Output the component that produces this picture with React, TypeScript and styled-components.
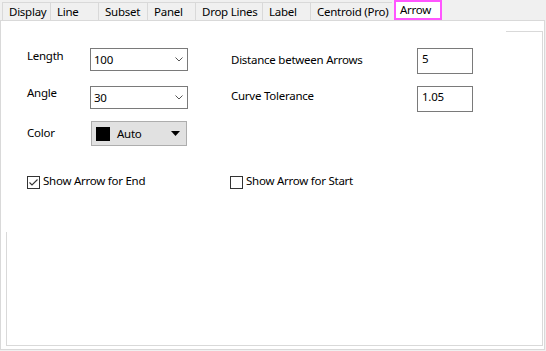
import React from "react";
import styled, { createGlobalStyle } from "styled-components";

const GlobalStyle = createGlobalStyle`
  html, body {
    margin: 0;
    padding: 0;
    background: #f0f0f0;
  }
  body {
    font-family: "Noto Sans", "Open Sans", sans-serif;
    font-size: 11.5px;
    letter-spacing: -0.25px;
    color: #000;
  }
`;

const Window = styled.div`
  width: 546px;
  height: 351px;
  background: #f0f0f0;
  display: flex;
  flex-direction: column;
  overflow: hidden;
`;

const TabStrip = styled.div`
  height: 20px;
  display: flex;
  align-items: flex-end;
  padding-left: 2px;
  box-sizing: border-box;
`;

const Tab = styled.div<{ $width: number; $active?: boolean }>`
  box-sizing: border-box;
  width: ${(p) => p.$width}px;
  height: ${(p) => (p.$active ? 20 : 18)}px;
  margin-left: ${(p) => (p.$active ? 2 : 0)}px;
  padding-left: ${(p) => (p.$active ? 4 : 6)}px;
  line-height: ${(p) => (p.$active ? 15 : 18)}px;
  background: ${(p) => (p.$active ? "#fff" : "#f0f0f0")};
  border: ${(p) => (p.$active ? "2px solid #ff55ff" : "1px solid #d9d9d9")};
  border-bottom: ${(p) => (p.$active ? "2px solid #ff55ff" : "none")};
  border-right: ${(p) => (p.$active ? "2px solid #ff55ff" : "none")};
  white-space: nowrap;
  position: relative;
  z-index: ${(p) => (p.$active ? 2 : 0)};
`;

const Panel = styled.div`
  position: relative;
  box-sizing: border-box;
  width: 545px;
  height: 330px;
  background: #fff;
  border: 1px solid #d9d9d9;
`;

const GroupFrame = styled.div`
  position: absolute;
  left: 5px;
  top: 10px;
  right: 1px;
  bottom: 3px;
  border: 1px solid #d9d9d9;
`;

const Form = styled.div`
  position: relative;
  z-index: 1;
  width: 505px;
  height: 211px;
  background: #fff;
  box-sizing: border-box;
  padding: 27px 0 0 26px;
`;

const FieldGrid = styled.div`
  display: grid;
  grid-template-columns: 63px 98px 43px 186px 56px;
  grid-template-rows: 38px 35px 25px;
  align-items: start;
`;

const Label = styled.div<{ $offset: number }>`
  line-height: 16px;
  margin-top: ${(p) => p.$offset}px;
  white-space: nowrap;
`;

const Combo = styled.div<{ $height: number }>`
  box-sizing: border-box;
  height: ${(p) => p.$height}px;
  border: 1px solid #7a7a7a;
  background: #fff;
  display: flex;
  align-items: center;
  padding: 0 4px 0 3px;
`;

const ComboValue = styled.span`
  flex: 1;
`;

const TextBox = styled.div<{ $height: number }>`
  box-sizing: border-box;
  height: ${(p) => p.$height}px;
  border: 1px solid #7a7a7a;
  background: #fff;
  padding: 2px 0 0 4px;
  line-height: 16px;
`;

const ColorButton = styled.div`
  box-sizing: border-box;
  width: 96px;
  height: 25px;
  margin-left: 1px;
  border: 1px solid #adadad;
  background: #e1e1e1;
  display: flex;
  align-items: center;
  padding: 0 6px 0 4px;
`;

const Swatch = styled.span<{ $color: string }>`
  width: 14px;
  height: 14px;
  background: ${(p) => p.$color};
  margin-right: 7px;
`;

const Spacer = styled.div``;

const CheckRow = styled.div`
  display: grid;
  grid-template-columns: 203px 200px;
  margin-top: 27px;
`;

const CheckItem = styled.label`
  display: flex;
  align-items: center;
  gap: 3px;
  line-height: 16px;
`;

const Box = styled.span`
  box-sizing: border-box;
  width: 13px;
  height: 13px;
  margin-top: 3px;
  border: 1px solid #333;
  background: #fff;
  display: flex;
  align-items: center;
  justify-content: center;
`;

const Chevron = () => (
  <svg width="8" height="5" viewBox="0 0 8 5">
    <path d="M0.5 0.5 L4 4 L7.5 0.5" fill="none" stroke="#555" strokeWidth="1" />
  </svg>
);

const DropTriangle = () => (
  <svg width="9" height="5" viewBox="0 0 9 5">
    <path d="M0 0 H9 L4.5 5 Z" fill="#000" />
  </svg>
);

const Check = ({ checked }: { checked: boolean }) => (
  <Box>
    {checked && (
      <svg width="11" height="11" viewBox="0 0 11 11">
        <path d="M1.5 5.5 L4 8 L9.5 2.5" fill="none" stroke="#333" strokeWidth="1.1" />
      </svg>
    )}
  </Box>
);

const tabs: { name: string; width: number }[] = [
  { name: "Display", width: 48 },
  { name: "Line", width: 48 },
  { name: "Subset", width: 49 },
  { name: "Panel", width: 48 },
  { name: "Drop Lines", width: 67 },
  { name: "Label", width: 48 },
  { name: "Centroid (Pro)", width: 82 },
];

export default function App() {
  return (
    <>
      <GlobalStyle />
      <Window>
        <TabStrip>
          {tabs.map((t) => (
            <Tab key={t.name} $width={t.width}>
              {t.name}
            </Tab>
          ))}
          <Tab $width={48} $active>
            Arrow
          </Tab>
        </TabStrip>
        <Panel>
          <GroupFrame />
          <Form>
            <FieldGrid>
              <Label $offset={0}>Length</Label>
              <Combo $height={23}>
                <ComboValue>100</ComboValue>
                <Chevron />
              </Combo>
              <Spacer />
              <Label $offset={4}>Distance between Arrows</Label>
              <TextBox $height={26}>5</TextBox>

              <Label $offset={-1}>Angle</Label>
              <Combo $height={23}>
                <ComboValue>30</ComboValue>
                <Chevron />
              </Combo>
              <Spacer />
              <Label $offset={2}>Curve Tolerance</Label>
              <TextBox $height={26}>1.05</TextBox>

              <Label $offset={4}>Color</Label>
              <ColorButton>
                <Swatch $color="#000" />
                <ComboValue>Auto</ComboValue>
                <DropTriangle />
              </ColorButton>
            </FieldGrid>
            <CheckRow>
              <CheckItem>
                <Check checked />
                Show Arrow for End
              </CheckItem>
              <CheckItem>
                <Check checked={false} />
                Show Arrow for Start
              </CheckItem>
            </CheckRow>
          </Form>
        </Panel>
      </Window>
    </>
  );
}
